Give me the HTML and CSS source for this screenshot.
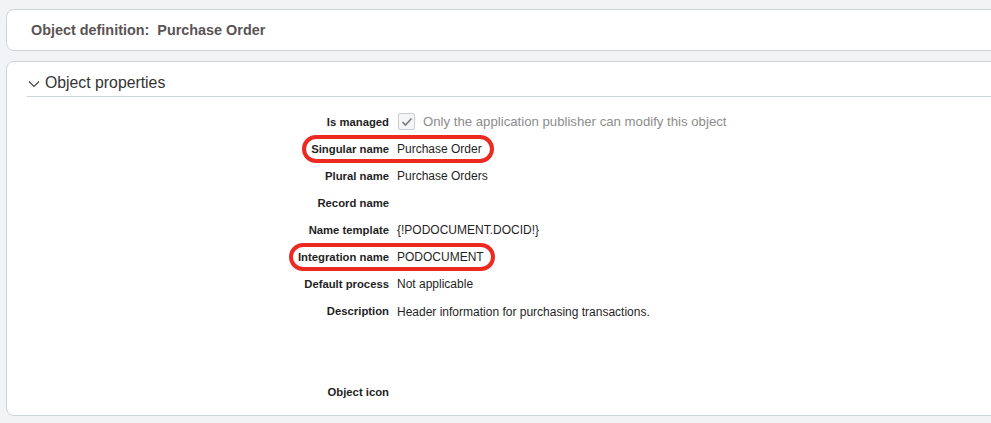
FILE: index.html
```html
<!DOCTYPE html>
<html lang="en">
<head>
<meta charset="UTF-8">
<meta name="viewport" content="width=device-width, initial-scale=1.0">
<title>Object definition: Purchase Order</title>
<link rel="stylesheet" href="styles.css">
</head>
<body>

<div class="page">
  <div class="card title-card">
    <h1 class="page-title">Object definition:&nbsp; Purchase Order</h1>
  </div>

  <div class="card props-card">
    <div class="section-head">
      <svg class="chevron" width="12" height="8" viewBox="0 0 12 8">
        <path d="M1 1.5 L6 6.5 L11 1.5" fill="none" stroke="#444" stroke-width="1.2"/>
      </svg>
      <span>Object properties</span>
    </div>

    <div class="fields">
      <div class="row">
        <div class="label">Is managed</div>
        <div class="value managed">
          <span class="checkbox">
            <svg width="12" height="10" viewBox="0 0 12 10">
              <path d="M1.5 5 L4.5 8 L10.5 1.5" fill="none" stroke="#7a7a7a" stroke-width="1.6"/>
            </svg>
          </span>
          <span class="muted">Only the application publisher can modify this object</span>
        </div>
      </div>
      <div class="row">
        <span class="ring ring-singular"></span>
        <div class="label">Singular name</div>
        <div class="value">Purchase Order</div>
      </div>
      <div class="row">
        <div class="label">Plural name</div>
        <div class="value">Purchase Orders</div>
      </div>
      <div class="row">
        <div class="label">Record name</div>
        <div class="value"></div>
      </div>
      <div class="row">
        <div class="label">Name template</div>
        <div class="value">{!PODOCUMENT.DOCID!}</div>
      </div>
      <div class="row">
        <span class="ring ring-integration"></span>
        <div class="label">Integration name</div>
        <div class="value">PODOCUMENT</div>
      </div>
      <div class="row">
        <div class="label">Default process</div>
        <div class="value">Not applicable</div>
      </div>
      <div class="row row-tall">
        <div class="label">Description</div>
        <div class="value">Header information for purchasing transactions.</div>
      </div>
      <div class="row">
        <div class="label">Object icon</div>
        <div class="value"></div>
      </div>
    </div>
  </div>
</div>

</body>
</html>
```

FILE: styles.css
```css
  body {
    margin: 0;
    background-color: #f1f3f5;
    font-family: "Liberation Sans", Arial, sans-serif;
    color: #222;
    overflow: hidden;
  }
  .page {
    padding: 9px 0 0 6px;
    width: 1010px;
  }
  .card {
    background-color: #fff;
    border: 1px solid #cdd5dc;
    border-radius: 8px;
  }
  .title-card {
    height: 40px;
    display: flex;
    align-items: center;
    padding-left: 24px;
    margin-bottom: 10px;
  }
  .page-title {
    margin: 0;
    font-size: 14.4px;
    font-weight: bold;
    color: #5a5454;
  }
  .props-card {
    height: 353px;
  }
  .section-head {
    display: flex;
    align-items: center;
    gap: 5px;
    height: 26px;
    padding-top: 8px;
    margin-left: 20px;
    padding-left: 1px;
    border-bottom: 1px solid #cdd5dc;
    font-size: 15.8px;
    color: #333;
  }
  .chevron {
    margin-top: 1px;
  }
  .fields {
    padding-top: 11px;
  }
  .row {
    position: relative;
    display: grid;
    grid-template-columns: 382px 1fr;
    column-gap: 8px;
    height: 27px;
    align-items: center;
  }
  .row-tall {
    height: 81px;
    align-items: start;
    padding-top: 8px;
    box-sizing: border-box;
  }
  .label {
    text-align: right;
    font-size: 11.3px;
    font-weight: bold;
    color: #1f1f1f;
  }
  .value {
    font-size: 12px;
    color: #1f1f1f;
  }
  .managed {
    display: flex;
    align-items: center;
    gap: 8px;
  }
  .checkbox {
    display: inline-flex;
    align-items: center;
    justify-content: center;
    width: 15px;
    height: 15px;
    border: 1px solid #c9cdd1;
    border-radius: 2px;
    background-color: #f4f5f6;
    margin-left: 1px;
  }
  .muted {
    font-size: 13.2px;
    color: #8c8c8c;
  }
  .ring {
    position: absolute;
    top: 0;
    height: 28px;
    box-sizing: border-box;
    border: 4px solid #ec2a22;
    border-radius: 14px;
  }
  .ring-singular {
    left: 295px;
    width: 192px;
  }
  .ring-integration {
    left: 282px;
    width: 206px;
  }
```
